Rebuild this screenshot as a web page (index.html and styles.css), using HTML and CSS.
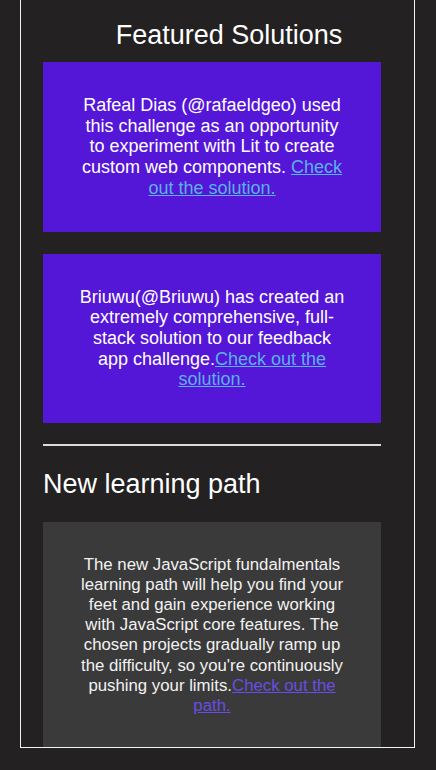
FILE: index.html
```html
<!DOCTYPE html>
<html lang="en">
<head>
<meta charset="utf-8">
<title>Featured Solutions</title>
<link rel="stylesheet" href="styles.css">
</head>
<body>
  <main class="frame">
    <section class="featured">
      <h2 class="featured-title">Featured Solutions</h2>
      <div class="card card-purple">
        <p class="card-text">Rafeal Dias (@rafaeldgeo) used this challenge as an opportunity to experiment with Lit to create custom web components. <a class="link-blue" href="#">Check out the solution.</a></p>
      </div>
      <div class="card card-purple">
        <p class="card-text">Briuwu(@Briuwu) has created an extremely comprehensive, full-stack solution to our feedback app challenge.<a class="link-blue" href="#">Check out the solution.</a></p>
      </div>
    </section>
    <hr class="divider">
    <section class="learning">
      <h2 class="learning-title">New learning path</h2>
      <div class="card card-gray">
        <p class="card-text card-text-small">The new JavaScript fundalmentals learning path will help you find your feet and gain experience working with JavaScript core features. The chosen projects gradually ramp up the difficulty, so you're continuously pushing your limits.<a class="link-purple" href="#">Check out the path.</a></p>
      </div>
    </section>
  </main>
</body>
</html>
```

FILE: styles.css
```css
html, body {
  margin: 0;
  padding: 0;
  background: #232121;
  font-family: "Liberation Sans", Arial, sans-serif;
  color: #ffffff;
}

.frame {
  box-sizing: border-box;
  margin-left: 20px;
  width: 395px;
  height: 748px;
  border: 1px solid #f2f2f2;
  border-top: none;
  overflow: hidden;
  padding: 0 33px 0 22px;
}

.featured-title {
  margin: 19px -34px 11px 0;
  font-size: 27px;
  font-weight: normal;
  line-height: 32px;
  text-align: center;
  color: #ffffff;
}

.card {
  box-sizing: border-box;
  padding: 33px 36px;
}

.card-purple {
  background: #5416d7;
}

.card-purple + .card-purple {
  margin-top: 22px;
}

.card-gray {
  background: #3a3a3a;
  padding-bottom: 60px;
}

.card-text {
  margin: 0;
  font-size: 18px;
  line-height: 20.7px;
  text-align: center;
  color: #ffffff;
}

.card-text-small {
  font-size: 16.8px;
  line-height: 20.1px;
  color: #f2f2f2;
}

.link-blue {
  color: #5ab2ea;
  text-decoration: underline;
}

.link-purple {
  color: #6a4de4;
  text-decoration: underline;
}

.divider {
  margin: 21px 0 0 0;
  border: none;
  height: 2px;
  background: #dcdcdc;
}

.learning-title {
  margin: 22px 0 22px 0;
  font-size: 27px;
  font-weight: normal;
  line-height: 32px;
  color: #ffffff;
}
```
